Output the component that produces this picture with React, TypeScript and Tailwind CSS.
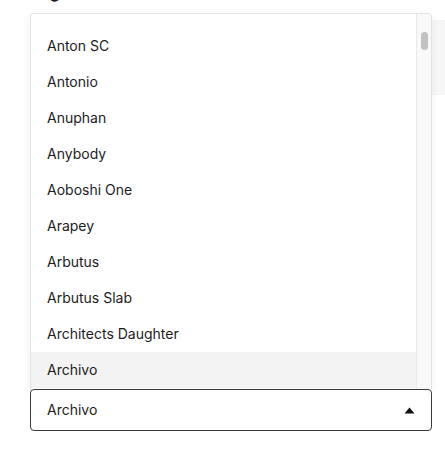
const fonts = [
  "Anton SC",
  "Antonio",
  "Anuphan",
  "Anybody",
  "Aoboshi One",
  "Arapey",
  "Arbutus",
  "Arbutus Slab",
  "Architects Daughter",
  "Archivo",
];

export default function App() {
  const selected = "Archivo";

  return (
    <div className="relative h-[454px] w-[445px] overflow-hidden bg-white font-['Inter','Liberation_Sans',sans-serif] text-[#1c1c1c]">
      {/* card peeking behind the open menu */}
      <div className="absolute left-[420px] top-[20px] h-[75px] w-[60px] rounded-lg bg-[#f6f6f6]" />

      <div className="relative ml-[30px] w-[402px]">
        <p className="mt-[-20px] mb-[9px] text-base font-bold leading-6">Regular font</p>

        <div className="flex h-[376px] overflow-hidden rounded-t border border-b-0 border-[#e3e3e3] bg-white shadow-[0_2px_8px_rgba(0,0,0,0.06)]">
          <ul className="flex-1 pt-[14px]">
            {fonts.map((font) => (
              <li
                key={font}
                className={`flex h-9 items-center px-4 text-sm ${font === selected ? "bg-[#f3f3f3]" : ""}`}
              >
                {font}
              </li>
            ))}
          </ul>
          <div className="w-[15px] border-l border-[#e8e8e8] bg-[#f9f9f9] pt-[18px]">
            <div className="mx-auto h-[18px] w-[7px] rounded-full bg-[#c2c2c2]" />
          </div>
        </div>

        <button
          type="button"
          className="flex h-[42px] w-full items-center justify-between rounded border border-[#3a3a3a] bg-white pl-4 pr-4 text-sm"
        >
          <span>{selected}</span>
          <svg width="11" height="7" viewBox="0 0 11 7" aria-hidden="true">
            <path d="M5.5 0.5 L10.5 6.5 L0.5 6.5 Z" fill="#111" />
          </svg>
        </button>
      </div>
    </div>
  );
}
